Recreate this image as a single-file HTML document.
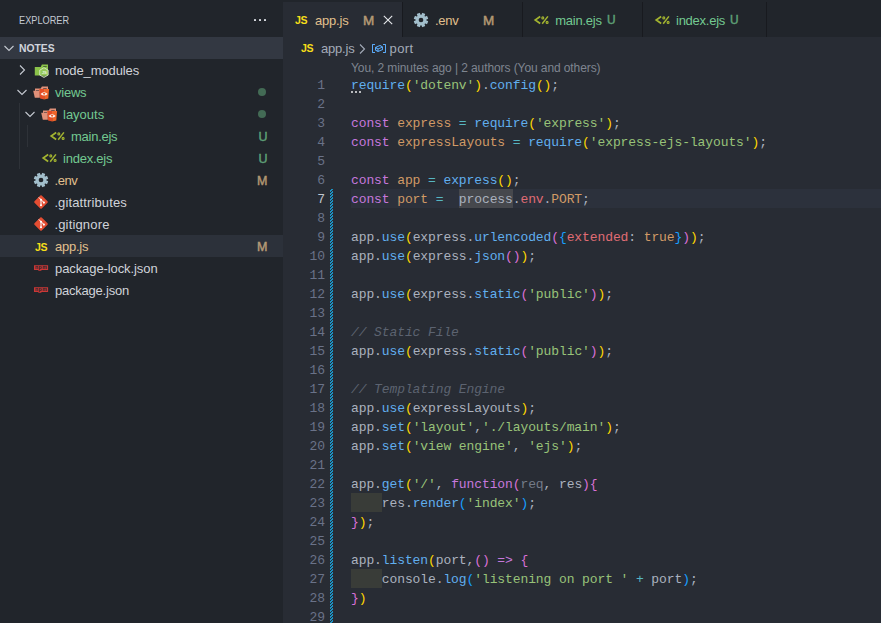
<!DOCTYPE html>
<html lang="en">
<head>
<meta charset="utf-8">
<title>app.js - notes - Visual Studio Code</title>
<style>
*{box-sizing:border-box;margin:0;padding:0}
html,body{width:881px;height:623px;overflow:hidden;background:#282c34}
body{position:relative;font-family:"Liberation Sans",sans-serif;font-size:13px;color:#abb2bf}
.abs{position:absolute}
svg{position:absolute;overflow:visible}
#sidebar{position:absolute;left:0;top:0;width:283px;height:623px;background:#21252b}
#sbtitle{position:absolute;left:19px;top:13px;font-size:11px;line-height:14px;color:#c5cad3;transform:scaleX(.835);transform-origin:0 0}
#dots{position:absolute;left:253.5px;top:18.7px;width:14px;height:3px}
#dots i{position:absolute;top:0;width:2.6px;height:2.5px;background:#d7dae0;border-radius:.6px}
#sechead{position:absolute;left:0;top:37px;width:283px;height:22px;background:#333842}
#sechead span{position:absolute;left:19px;top:4px;font-size:11px;line-height:14px;font-weight:bold;color:#d0d4dc;transform:scaleX(.94);transform-origin:0 0}
.row{position:absolute;left:0;width:283px;height:22px}
.row .lbl{position:absolute;top:1px;line-height:22px;font-size:13px;white-space:nowrap;color:#d0d3d9}
.row .st{position:absolute;top:1px;line-height:22px;font-size:12.5px;width:30px;text-align:right;left:237.5px;-webkit-text-stroke:.4px currentColor}
.row.sel{background:#2c313a}
.g{color:#73c991}
.m{color:#e2c08d}
.row .lbl.g{color:#73c991}
.row .lbl.m{color:#e2c08d}
.st,.bd{opacity:.75}
.st.g,.bd.g{color:#73c991}
.st.m,.bd.m{color:#e2c08d}
.dot{position:absolute;left:257.7px;top:6.7px;width:8.5px;height:8.5px;border-radius:50%;background:#436b55}
.guide{position:absolute;width:1px;background:#2e3238}
.chev{fill:none;stroke:#c5c9d1;stroke-width:1.1}
#editor{position:absolute;left:283px;top:0;width:598px;height:623px;background:#282c34}
#tabbar{position:absolute;left:0;top:0;width:598px;height:37px;background:#21252b}
.tab{position:absolute;top:2px;height:35px;border-right:1px solid #181a1f;background:#21252b}
.tab.active{background:#282c34}
.tab .t{position:absolute;top:1px;line-height:35px;font-size:13px;white-space:nowrap}
.tab .bd{font-size:13.5px;-webkit-text-stroke:.45px currentColor}
.tab .bd.g{font-size:13.2px;transform:scaleX(.9);transform-origin:0 50%;top:0.2px}
.jsic{position:absolute;font-weight:bold;color:#f5de19;font-size:11.5px;line-height:12px;letter-spacing:-0.3px;transform:scaleX(.92);transform-origin:0 0}
#crumbs{position:absolute;left:0;top:37px;width:598px;height:22px}
#crumbs .t{position:absolute;top:1px;line-height:22px;font-size:13px;color:#a4abb8;white-space:nowrap}
#lens{position:absolute;left:68px;top:60px;line-height:17px;font-size:12px;letter-spacing:-0.09px;color:#7f8590;white-space:nowrap}
#code{position:absolute;left:0;top:75px;width:598px}
.hint{position:absolute;left:68px;top:16px;width:10px;height:2px}
.hint i{position:absolute;top:0;width:2px;height:2px;background:#b9bbbe}
.ln{position:absolute;left:0;width:598px;height:19px}
.ln .n{position:absolute;left:0;top:1px;width:42px;text-align:right;color:#6a7288}
.ln .n,.ln .c{font-family:"Liberation Mono",monospace;font-size:13px;line-height:19px;letter-spacing:-0.1px;white-space:pre}
.ln .c{position:absolute;left:68px;top:1px;color:#abb2bf}
.ln.cur .n{color:#c0c5ce}
.ln.cur .hl{position:absolute;left:68px;top:0;width:530px;height:19px;background:#2c313c}
.k{color:#c678dd}.v{color:#d19a66}.o{color:#56b6c2}.f{color:#61afef}.s{color:#98c379}
.b1{color:#ffd700}.b2{color:#da70d6}.b3{color:#179fff}.r{color:#e06c75}.nm{color:#d19a66}
.cm{color:#5c6370;font-style:italic}.dim{color:#747b88}
.ind{position:absolute;left:68px;top:0;width:30.8px;height:19px;background:#393c38}
.sel2{position:absolute;left:175.8px;top:0;width:54px;height:19px;background:#46484d}
#diff{left:47px;top:189px}
</style>
</head>
<body>
<div id="sidebar">
<div id="sbtitle">EXPLORER</div>
<div id="dots"><i style="left:0"></i><i style="left:5.05px"></i><i style="left:10.1px"></i></div>
<div id="sechead"><svg style="left:0.6px;top:3px" width="16" height="16" viewBox="0 0 16 16"><path class="chev" d="M3.5 6 L8 10.5 L12.5 6"/></svg><span>NOTES</span></div>
<div class="guide" style="left:19px;top:103px;height:66px"></div>
<div class="guide" style="left:27px;top:125px;height:22px"></div>
<div class="row" style="top:59px"><svg style="left:14px;top:3px" width="16" height="16" viewBox="0 0 16 16"><path class="chev" d="M6 3.5 L10.5 8 L6 12.5"/></svg><svg style="left:34px;top:3px" width="16" height="17" viewBox="0 0 16 17"><path fill="#8bc34a" d="M0.8 4.9H6.7L7.9 2.5H14V13.4H0.8Z"/><rect x="9.2" y="4" width="3.5" height=".7" fill="#21252b" opacity=".85"/><path fill="#9ccc65" fill-opacity=".55" stroke="#e4eedb" stroke-width=".75" d="M9.96 5.7L14.2 8.15V13.05L9.96 15.5L5.72 13.05V8.15Z"/><text x="7.7" y="12.4" font-size="4.4" font-family="Liberation Sans,sans-serif" font-weight="bold" fill="#ffffff" fill-opacity=".75" letter-spacing="-.2">JS</text></svg><span class="lbl" style="left:55px;letter-spacing:-0.1px">node_modules</span></div>
<div class="row" style="top:81px"><svg style="left:14px;top:3px" width="16" height="16" viewBox="0 0 16 16"><path class="chev" d="M3.5 6 L8 10.5 L12.5 6"/></svg><svg style="left:33px;top:3px" width="17" height="16" viewBox="0 0 17 16"><path fill="#e0917a" d="M2 4.4H7.7L8.9 2.5H15V8H2Z"/><rect x="10.2" y="4" width="3.5" height=".7" fill="#21252b" opacity=".85"/><path fill="#e0917a" d="M0.2 6.7H6.8V13.7H1.8Z"/><rect x="2.9" y="6.1" width="3.2" height=".6" fill="#21252b" opacity=".85"/><path fill="#e44d26" d="M6.3 5.1H11.2V15.6L7.1 14.4Z"/><path fill="#f16529" d="M11.2 5.1H16.1L15.3 14.4L11.2 15.6Z"/><path d="M7.5 9.9Q11.1 6.5 14.7 9.9Q11.1 13.3 7.5 9.9Z" fill="#fff" fill-opacity=".95"/><path d="M9.7 9.1h2.8L11.1 11.2Z" fill="#ee5a24"/></svg><span class="lbl g" style="left:55px;letter-spacing:-0.24px">views</span><div class="dot"></div></div>
<div class="row" style="top:103px"><svg style="left:22px;top:3px" width="16" height="16" viewBox="0 0 16 16"><path class="chev" d="M3.5 6 L8 10.5 L12.5 6"/></svg><svg style="left:41px;top:3px" width="17" height="16" viewBox="0 0 17 16"><path fill="#e0917a" d="M2 4.4H7.7L8.9 2.5H15V8H2Z"/><rect x="10.2" y="4" width="3.5" height=".7" fill="#21252b" opacity=".85"/><path fill="#e0917a" d="M0.2 6.7H6.8V13.7H1.8Z"/><rect x="2.9" y="6.1" width="3.2" height=".6" fill="#21252b" opacity=".85"/><path fill="#e44d26" d="M6.3 5.1H11.2V15.6L7.1 14.4Z"/><path fill="#f16529" d="M11.2 5.1H16.1L15.3 14.4L11.2 15.6Z"/><path d="M7.5 9.9Q11.1 6.5 14.7 9.9Q11.1 13.3 7.5 9.9Z" fill="#fff" fill-opacity=".95"/><path d="M9.7 9.1h2.8L11.1 11.2Z" fill="#ee5a24"/></svg><span class="lbl g" style="left:63px">layouts</span><div class="dot"></div></div>
<div class="row" style="top:125px"><svg style="left:49.6px;top:3px" width="16" height="16" viewBox="0 0 16 16"><path d="M6.2 4.5L1.2 8L6.2 11.5" fill="none" stroke="#a3b430" stroke-width="1.7"/><path d="M13.9 4.4L8.2 11.7" fill="none" stroke="#a3b430" stroke-width="1.5"/><circle cx="8.8" cy="5.9" r="1" fill="none" stroke="#a3b430" stroke-width="1.1"/><circle cx="13.1" cy="10.4" r="1" fill="none" stroke="#a3b430" stroke-width="1.1"/></svg><span class="lbl g" style="left:71px;letter-spacing:-0.26px">main.ejs</span><span class="st g">U</span></div>
<div class="row" style="top:147px"><svg style="left:41.7px;top:3px" width="16" height="16" viewBox="0 0 16 16"><path d="M6.2 4.5L1.2 8L6.2 11.5" fill="none" stroke="#a3b430" stroke-width="1.7"/><path d="M13.9 4.4L8.2 11.7" fill="none" stroke="#a3b430" stroke-width="1.5"/><circle cx="8.8" cy="5.9" r="1" fill="none" stroke="#a3b430" stroke-width="1.1"/><circle cx="13.1" cy="10.4" r="1" fill="none" stroke="#a3b430" stroke-width="1.1"/></svg><span class="lbl g" style="left:63px;letter-spacing:-0.23px">index.ejs</span><span class="st g">U</span></div>
<div class="row" style="top:169px"><svg style="left:33px;top:3px" width="16" height="16" viewBox="0 0 16 16"><g fill="#a3bfcc"><circle cx="8" cy="8" r="5.3"/><rect x="6.35" y="0.8" width="3.3" height="14.4" rx=".5" transform="rotate(22.5 8 8)"/><rect x="6.35" y="0.8" width="3.3" height="14.4" rx=".5" transform="rotate(67.5 8 8)"/><rect x="6.35" y="0.8" width="3.3" height="14.4" rx=".5" transform="rotate(112.5 8 8)"/><rect x="6.35" y="0.8" width="3.3" height="14.4" rx=".5" transform="rotate(157.5 8 8)"/></g><circle cx="8" cy="8" r="2.35" fill="#21252b"/></svg><span class="lbl m" style="left:54.4px;letter-spacing:-0.37px">.env</span><span class="st m">M</span></div>
<div class="row" style="top:191px"><svg style="left:33px;top:3px" width="16" height="16" viewBox="0 0 16 16"><rect x="2.9" y="2.9" width="10.2" height="10.2" rx="1" transform="rotate(45 8 8)" fill="#e44d32"/><path d="M5.8 3.4L10.9 8.5M8 5.6v5.6" stroke="#fff" stroke-width="1" fill="none"/><circle cx="10.9" cy="8.6" r="1.05" fill="#fff"/><circle cx="8" cy="11.3" r="1.05" fill="#fff"/><circle cx="8" cy="5.8" r="1.05" fill="#fff"/></svg><span class="lbl" style="left:54.4px;letter-spacing:0.12px">.gitattributes</span></div>
<div class="row" style="top:213px"><svg style="left:33px;top:3px" width="16" height="16" viewBox="0 0 16 16"><rect x="2.9" y="2.9" width="10.2" height="10.2" rx="1" transform="rotate(45 8 8)" fill="#e44d32"/><path d="M5.8 3.4L10.9 8.5M8 5.6v5.6" stroke="#fff" stroke-width="1" fill="none"/><circle cx="10.9" cy="8.6" r="1.05" fill="#fff"/><circle cx="8" cy="11.3" r="1.05" fill="#fff"/><circle cx="8" cy="5.8" r="1.05" fill="#fff"/></svg><span class="lbl" style="left:54.4px;letter-spacing:0.17px">.gitignore</span></div>
<div class="row sel" style="top:235px"><span class="jsic" style="left:35px;top:5.6px">JS</span><span class="lbl m" style="left:55px;letter-spacing:-0.25px">app.js</span><span class="st m">M</span></div>
<div class="row" style="top:257px"><svg style="left:34px;top:3px" width="16" height="16" viewBox="0 0 16 16"><path fill="#cb3837" d="M0 5.3H14.1V9.9H7.4V10.7H4.3V9.9H0Z"/><text x="1.1" y="9.3" font-size="5.2" font-weight="bold" font-family="Liberation Sans,sans-serif" fill="#21252b" letter-spacing=".35">npm</text></svg><span class="lbl" style="left:55px;letter-spacing:-0.09px">package-lock.json</span></div>
<div class="row" style="top:279px"><svg style="left:34px;top:3px" width="16" height="16" viewBox="0 0 16 16"><path fill="#cb3837" d="M0 5.3H14.1V9.9H7.4V10.7H4.3V9.9H0Z"/><text x="1.1" y="9.3" font-size="5.2" font-weight="bold" font-family="Liberation Sans,sans-serif" fill="#21252b" letter-spacing=".35">npm</text></svg><span class="lbl" style="left:55px;letter-spacing:-0.22px">package.json</span></div>
</div>
<div id="editor">
<div id="tabbar">
<div class="tab active" style="left:0;width:120px"><span class="jsic" style="left:12px;top:11.6px">JS</span><span class="t m" style="left:32px;letter-spacing:-0.2px">app.js</span><span class="t bd m" style="left:80px">M</span><svg style="left:96.7px;top:9.8px" width="16" height="16" viewBox="0 0 16 16"><path d="M3.8 3.8l8.4 8.4M12.2 3.8l-8.4 8.4" stroke="#e6e8ec" stroke-width="1.1" fill="none"/></svg></div>
<div class="tab" style="left:120px;width:120px"><svg style="left:10px;top:10px" width="16" height="16" viewBox="0 0 16 16"><g fill="#a3bfcc"><circle cx="8" cy="8" r="5.3"/><rect x="6.35" y="0.8" width="3.3" height="14.4" rx=".5" transform="rotate(22.5 8 8)"/><rect x="6.35" y="0.8" width="3.3" height="14.4" rx=".5" transform="rotate(67.5 8 8)"/><rect x="6.35" y="0.8" width="3.3" height="14.4" rx=".5" transform="rotate(112.5 8 8)"/><rect x="6.35" y="0.8" width="3.3" height="14.4" rx=".5" transform="rotate(157.5 8 8)"/></g><circle cx="8" cy="8" r="2.35" fill="#21252b"/></svg><span class="t m" style="left:32px;letter-spacing:-0.3px">.env</span><span class="t bd m" style="left:80px">M</span></div>
<div class="tab" style="left:240px;width:120px"><svg style="left:10.5px;top:10px" width="16" height="16" viewBox="0 0 16 16"><path d="M6.2 4.5L1.2 8L6.2 11.5" fill="none" stroke="#a3b430" stroke-width="1.7"/><path d="M13.9 4.4L8.2 11.7" fill="none" stroke="#a3b430" stroke-width="1.5"/><circle cx="8.8" cy="5.9" r="1" fill="none" stroke="#a3b430" stroke-width="1.1"/><circle cx="13.1" cy="10.4" r="1" fill="none" stroke="#a3b430" stroke-width="1.1"/></svg><span class="t g" style="left:32.3px;letter-spacing:-0.26px">main.ejs</span><span class="t bd g" style="left:83.5px">U</span></div>
<div class="tab" style="left:360px;width:124px"><svg style="left:11.5px;top:10px" width="16" height="16" viewBox="0 0 16 16"><path d="M6.2 4.5L1.2 8L6.2 11.5" fill="none" stroke="#a3b430" stroke-width="1.7"/><path d="M13.9 4.4L8.2 11.7" fill="none" stroke="#a3b430" stroke-width="1.5"/><circle cx="8.8" cy="5.9" r="1" fill="none" stroke="#a3b430" stroke-width="1.1"/><circle cx="13.1" cy="10.4" r="1" fill="none" stroke="#a3b430" stroke-width="1.1"/></svg><span class="t g" style="left:33px;letter-spacing:-0.25px">index.ejs</span><span class="t bd g" style="left:87px">U</span></div>
</div>
<div id="crumbs">
<span class="jsic" style="left:18px;top:5.1px">JS</span>
<span class="t" style="left:38px;letter-spacing:-0.2px">app.js</span>
<svg style="left:71px;top:4px" width="16" height="16" viewBox="0 0 16 16"><path d="M6 3.5 L10.5 8 L6 12.5" fill="none" stroke="#a4abb8" stroke-width="1.1"/></svg>
<svg style="left:87.7px;top:3px" width="16" height="16" viewBox="0 0 16 16"><path fill="#5aaaf8" fill-rule="evenodd" clip-rule="evenodd" d="M2 5h2V4H1.5l-.5.5v8l.5.5H4v-1H2V5zm12.5-1H12v1h2v7h-2v1h2.5l.5-.5v-8l-.5-.5zm-2.74 2.57L12 7v2.51l-.3.45-4.5 2h-.46l-2.5-1.5-.24-.43v-2.5l.3-.46 4.5-2h.46l2.5 1.5zM5 9.71l1.5.9V9.28L5 8.38v1.33zm.58-2.15l1.45.87 3.39-1.5-1.45-.87-3.39 1.5zm1.95 3.17l3.5-1.56v-1.4l-3.5 1.55v1.41z"/></svg>
<span class="t" style="left:106.5px;letter-spacing:0.4px">port</span>
</div>
<div id="lens">You, 2 minutes ago | 2 authors (You and others)</div>
<svg id="diff" width="3" height="434" viewBox="0 0 3 434" shape-rendering="crispEdges"><defs><pattern id="dp" width="3" height="3" patternUnits="userSpaceOnUse"><rect width="3" height="3" fill="#1c93c4"/><rect x="0" y="0" width="1" height="1" fill="#282c34"/><rect x="2" y="1" width="1" height="1" fill="#282c34"/><rect x="1" y="2" width="1" height="1" fill="#282c34"/></pattern></defs><rect width="3" height="434" fill="url(#dp)"/></svg>
<div id="code">
<div class="ln" style="top:0px"><div class="hint"><i style="left:0"></i><i style="left:4px"></i><i style="left:8px"></i></div><span class="n">1</span><span class="c"><span class="f">require</span><span class="b1">(</span><span class="s">'dotenv'</span><span class="b1">)</span>.<span class="f">config</span><span class="b1">()</span>;</span></div>
<div class="ln" style="top:19px"><span class="n">2</span></div>
<div class="ln" style="top:38px"><span class="n">3</span><span class="c"><span class="k">const</span> <span class="v">express</span> <span class="o">=</span> <span class="f">require</span><span class="b1">(</span><span class="s">'express'</span><span class="b1">)</span>;</span></div>
<div class="ln" style="top:57px"><span class="n">4</span><span class="c"><span class="k">const</span> <span class="v">expressLayouts</span> <span class="o">=</span> <span class="f">require</span><span class="b1">(</span><span class="s">'express-ejs-layouts'</span><span class="b1">)</span>;</span></div>
<div class="ln" style="top:76px"><span class="n">5</span></div>
<div class="ln" style="top:95px"><span class="n">6</span><span class="c"><span class="k">const</span> <span class="v">app</span> <span class="o">=</span> <span class="f">express</span><span class="b1">()</span>;</span></div>
<div class="ln cur" style="top:114px"><div class="hl"></div><div class="sel2"></div><span class="n">7</span><span class="c"><span class="k">const</span> <span class="v">port</span> <span class="o">=</span>  process.<span class="r">env</span>.<span class="v">PORT</span>;</span></div>
<div class="ln" style="top:133px"><span class="n">8</span></div>
<div class="ln" style="top:152px"><span class="n">9</span><span class="c">app.<span class="f">use</span><span class="b1">(</span>express.<span class="f">urlencoded</span><span class="b2">(</span><span class="b3">{</span><span class="r">extended</span>: <span class="nm">true</span><span class="b3">}</span><span class="b2">)</span><span class="b1">)</span>;</span></div>
<div class="ln" style="top:171px"><span class="n">10</span><span class="c">app.<span class="f">use</span><span class="b1">(</span>express.<span class="f">json</span><span class="b2">()</span><span class="b1">)</span>;</span></div>
<div class="ln" style="top:190px"><span class="n">11</span></div>
<div class="ln" style="top:209px"><span class="n">12</span><span class="c">app.<span class="f">use</span><span class="b1">(</span>express.<span class="f">static</span><span class="b2">(</span><span class="s">'public'</span><span class="b2">)</span><span class="b1">)</span>;</span></div>
<div class="ln" style="top:228px"><span class="n">13</span></div>
<div class="ln" style="top:247px"><span class="n">14</span><span class="c"><span class="cm">// Static File</span></span></div>
<div class="ln" style="top:266px"><span class="n">15</span><span class="c">app.<span class="f">use</span><span class="b1">(</span>express.<span class="f">static</span><span class="b2">(</span><span class="s">'public'</span><span class="b2">)</span><span class="b1">)</span>;</span></div>
<div class="ln" style="top:285px"><span class="n">16</span></div>
<div class="ln" style="top:304px"><span class="n">17</span><span class="c"><span class="cm">// Templating Engine</span></span></div>
<div class="ln" style="top:323px"><span class="n">18</span><span class="c">app.<span class="f">use</span><span class="b1">(</span>expressLayouts<span class="b1">)</span>;</span></div>
<div class="ln" style="top:342px"><span class="n">19</span><span class="c">app.<span class="f">set</span><span class="b1">(</span><span class="s">'layout'</span>,<span class="s">'./layouts/main'</span><span class="b1">)</span>;</span></div>
<div class="ln" style="top:361px"><span class="n">20</span><span class="c">app.<span class="f">set</span><span class="b1">(</span><span class="s">'view engine'</span>, <span class="s">'ejs'</span><span class="b1">)</span>;</span></div>
<div class="ln" style="top:380px"><span class="n">21</span></div>
<div class="ln" style="top:399px"><span class="n">22</span><span class="c">app.<span class="f">get</span><span class="b1">(</span><span class="s">'/'</span>, <span class="k">function</span><span class="b2">(</span><span class="dim">req</span>, res<span class="b2">)</span><span class="b2">{</span></span></div>
<div class="ln" style="top:418px"><div class="ind"></div><span class="n">23</span><span class="c">    res.<span class="f">render</span><span class="b3">(</span><span class="s">'index'</span><span class="b3">)</span>;</span></div>
<div class="ln" style="top:437px"><span class="n">24</span><span class="c"><span class="b2">}</span><span class="b1">)</span>;</span></div>
<div class="ln" style="top:456px"><span class="n">25</span></div>
<div class="ln" style="top:475px"><span class="n">26</span><span class="c">app.<span class="f">listen</span><span class="b1">(</span>port,<span class="b2">()</span> <span class="k">=&gt;</span> <span class="b2">{</span></span></div>
<div class="ln" style="top:494px"><div class="ind"></div><span class="n">27</span><span class="c">    console.<span class="f">log</span><span class="b3">(</span><span class="s">'listening on port '</span> <span class="o">+</span> port<span class="b3">)</span>;</span></div>
<div class="ln" style="top:513px"><span class="n">28</span><span class="c"><span class="b2">}</span><span class="b1">)</span></span></div>
<div class="ln" style="top:532px"><span class="n">29</span></div>
</div>
</div>
</body>
</html>
